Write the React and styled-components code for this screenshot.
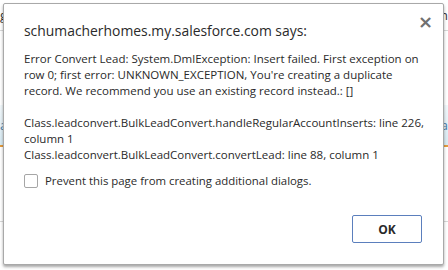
import React from 'react';
import styled, { createGlobalStyle } from 'styled-components';

const GlobalStyle = createGlobalStyle`
  html, body {
    margin: 0;
    padding: 0;
    background: #fff;
  }
  body {
    font-family: 'Open Sans', 'Noto Sans', sans-serif;
  }
`;

const Page = styled.div`
  position: relative;
  width: 448px;
  height: 270px;
  overflow: hidden;
  background: #fff;
  display: flex;
  flex-direction: column;
`;

const TopStrip = styled.div`
  height: 30px;
  border-bottom: 1px solid #d8d8d8;
  display: flex;
  justify-content: space-between;
  align-items: center;
  font-size: 13px;
  color: #333;
`;

const Band = styled.div`
  margin-top: 74px;
  height: 40px;
  background: linear-gradient(#f2f8fb, #d6e9f2);
  border-bottom: 2px solid #e39a3c;
  display: flex;
  justify-content: space-between;
  align-items: center;
  font-size: 13px;
  color: #4a7da8;
`;

const BottomStrip = styled.div`
  margin-top: 74px;
  border-top: 1px solid #d8d8d8;
  height: 20px;
`;

const Dialog = styled.div`
  position: absolute;
  left: 3px;
  top: 3px;
  width: 441px;
  height: 262px;
  box-sizing: border-box;
  background: #fff;
  border: 1px solid #a9a9a9;
  border-radius: 2px;
  box-shadow: 0 2px 3px rgba(0, 0, 0, 0.35);
  padding: 16px 20px 0 20px;
  display: flex;
  flex-direction: column;
`;

const Close = styled.div`
  position: absolute;
  right: 10px;
  top: 7px;
  font-size: 18px;
  font-weight: bold;
  color: #707070;
  font-family: 'DejaVu Sans', sans-serif;
`;

const Title = styled.div`
  font-size: 13.9px;
  color: #2a2a2a;
  line-height: 22px;
`;

const Message = styled.div`
  margin-top: 9px;
  font-size: 11.5px;
  line-height: 16px;
  color: #2a2a2a;
  white-space: nowrap;
`;

const Gap = styled.div`
  height: 16px;
`;

const CheckRow = styled.label`
  margin-top: 10px;
  display: flex;
  align-items: center;
  gap: 7px;
  font-size: 11.4px;
  color: #2a2a2a;
`;

const Box = styled.span`
  width: 12px;
  height: 12px;
  border: 1px solid #a6a6a6;
  border-radius: 2px;
  background: #fff;
`;

const Footer = styled.div`
  margin-top: auto;
  padding-bottom: 21px;
  display: flex;
  justify-content: flex-end;
`;

const Button = styled.button`
  width: 70px;
  height: 28px;
  margin-right: 1px;
  background: #fff;
  border: 1px solid #5b7fbd;
  border-radius: 2px;
  font-family: 'Open Sans', sans-serif;
  font-weight: bold;
  font-size: 12px;
  color: #2a2a2a;
`;

export default function App() {
  return (
    <>
      <GlobalStyle />
      <Page>
        <TopStrip>
          <span>g</span>
          <span>n</span>
        </TopStrip>
        <Band>
          <span>a</span>
          <span>a</span>
        </Band>
        <BottomStrip />
        <Dialog>
          <Close>×</Close>
          <Title>schumacherhomes.my.salesforce.com says:</Title>
          <Message>
            Error Convert Lead: System.DmlException: Insert failed. First exception on
            <br />
            row 0; first error: UNKNOWN_EXCEPTION, You're creating a duplicate
            <br />
            record. We recommend you use an existing record instead.: []
            <Gap />
            Class.leadconvert.BulkLeadConvert.handleRegularAccountInserts: line 226,
            <br />
            column 1
            <br />
            Class.leadconvert.BulkLeadConvert.convertLead: line 88, column 1
          </Message>
          <CheckRow>
            <Box />
            Prevent this page from creating additional dialogs.
          </CheckRow>
          <Footer>
            <Button>OK</Button>
          </Footer>
        </Dialog>
      </Page>
    </>
  );
}
